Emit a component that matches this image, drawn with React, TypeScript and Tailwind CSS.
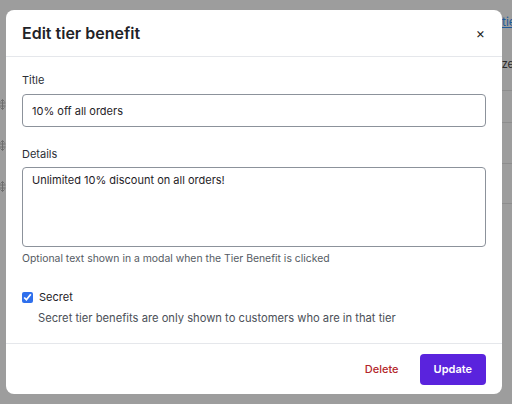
import React, { useState } from 'react';

const Handle: React.FC = () => (
  <svg width="7" height="11" viewBox="0 0 7 11" className="text-[#6f6f6f]">
    <path d="M3.5 0.5v10M1.5 2.5l2-2 2 2M1.5 8.5l2 2 2-2M0.5 4h6M0.5 7h6" stroke="currentColor" strokeWidth="1" fill="none" />
  </svg>
);

const App: React.FC = () => {
  const [title, setTitle] = useState('10% off all orders');
  const [details, setDetails] = useState('Unlimited 10% discount on all orders!');
  const [secret, setSecret] = useState(true);

  return (
    <div
      className="relative w-[512px] h-[404px] overflow-hidden bg-[#9d9d9d]"
      style={{ fontFamily: 'Inter, "Noto Sans", sans-serif' }}
    >
      {/* Page behind the overlay */}
      <div className="absolute inset-0">
        <div className="absolute left-[-1px] top-[99px] flex flex-col gap-[30px]">
          <Handle />
          <Handle />
          <Handle />
        </div>
        <div className="absolute left-[502px] top-0 w-[40px]">
          <div className="pt-[14px] text-[12px] leading-[15px] text-[#1f5a99] underline">tiers</div>
          <div className="pt-[28px] text-[11px] leading-[14px] text-[#2b2b2b] -ml-[3px]">ize</div>
          <div className="mt-[19px] h-[32px] border-t border-[#8d8d8d]" />
          <div className="h-[41px] border-t border-[#8d8d8d]" />
          <div className="h-[40px] border-t border-[#8d8d8d]" />
          <div className="border-t border-[#8d8d8d]" />
        </div>
      </div>

      {/* Modal */}
      <div className="relative ml-[6px] mt-[10px] w-[496px] h-[384px] rounded-lg bg-white flex flex-col">
        <div className="h-[47px] flex items-center justify-between px-4 border-b border-[#e5e7eb]">
          <h2 className="text-base font-semibold text-[#1f2328]">Edit tier benefit</h2>
          <button className="text-[14px] leading-none text-[#222] pr-[1px]">×</button>
        </div>

        <div className="flex-1 px-4 pt-[16px]">
          <label className="block text-[11px] leading-[14px] text-[#2b2f36]">Title</label>
          <input
            value={title}
            onChange={(e) => setTitle(e.target.value)}
            className="block mt-[7px] w-full h-[33px] px-[9px] text-[11px] text-[#1f2328] border border-[#8c929b] rounded-[4px] outline-none"
          />

          <label className="block mt-[20px] text-[11px] leading-[14px] text-[#2b2f36]">Details</label>
          <textarea
            value={details}
            onChange={(e) => setDetails(e.target.value)}
            className="block mt-[6px] w-full h-[80px] px-[9px] py-[5px] text-[11px] leading-[15px] text-[#1f2328] border border-[#8c929b] rounded-[4px] outline-none resize-none"
          />
          <p className="mt-[5px] text-[10.4px] leading-[13px] text-[#555b63]">
            Optional text shown in a modal when the Tier Benefit is clicked
          </p>

          <div className="mt-[25px] h-[14px] flex items-center gap-[6px]">
            <input
              type="checkbox"
              checked={secret}
              onChange={(e) => setSecret(e.target.checked)}
              className="m-0 w-[11px] h-[11px] accent-[#2f6fec]"
            />
            <span className="text-[11px] leading-[14px] text-[#1f2328]">Secret</span>
          </div>
          <p className="mt-[7px] ml-[16px] text-[11.2px] leading-[14px] text-[#4b5058]">
            Secret tier benefits are only shown to customers who are in that tier
          </p>
        </div>

        <div className="h-[51px] border-t border-[#e5e7eb] flex items-center justify-end gap-[21px] px-4">
          <button className="text-[11px] font-medium text-[#b3262b]">Delete</button>
          <button className="h-[31px] px-[14px] rounded-[4px] bg-[#5a23dd] text-[11px] font-semibold text-white">
            Update
          </button>
        </div>
      </div>
    </div>
  );
};

export default App;
